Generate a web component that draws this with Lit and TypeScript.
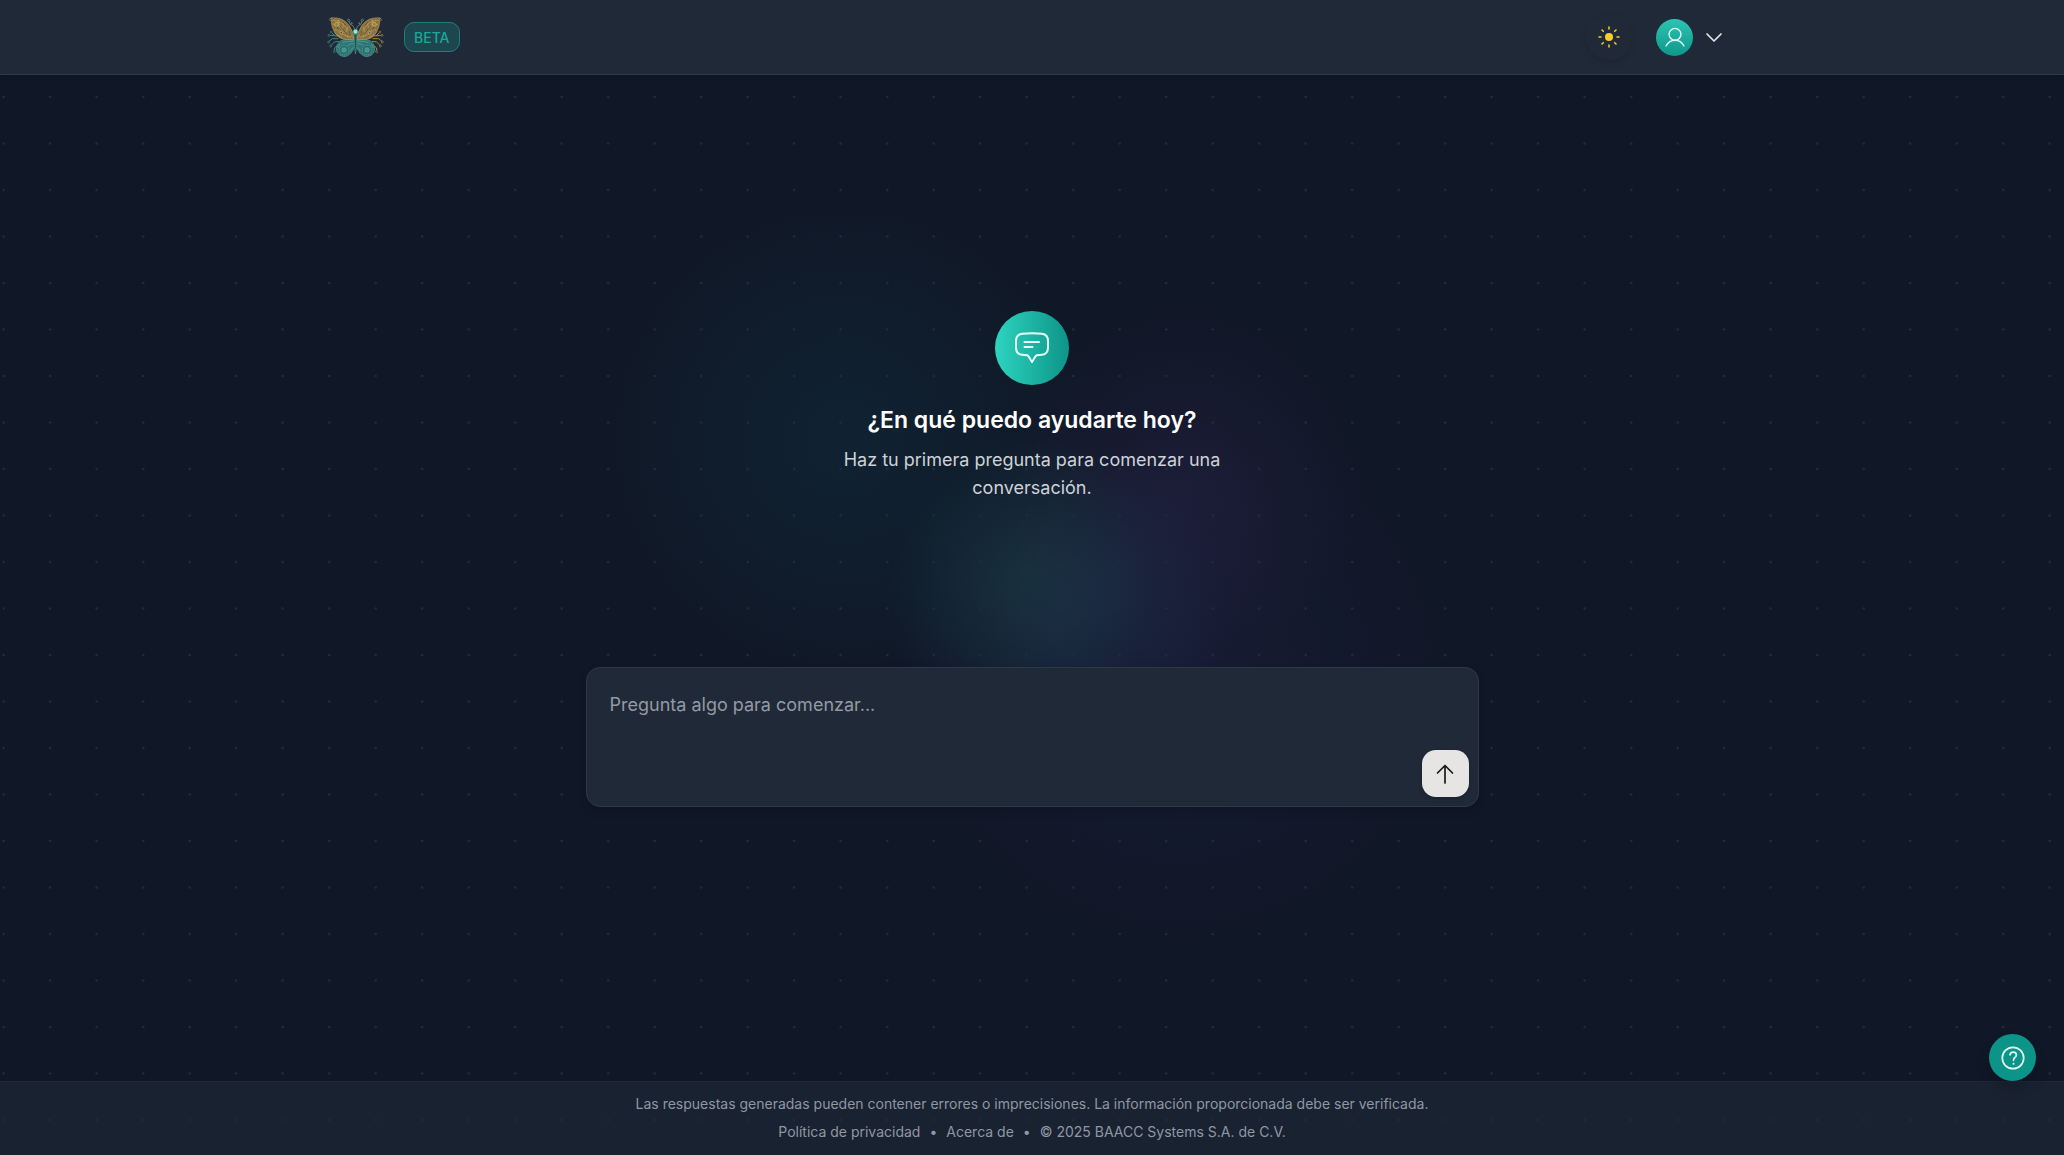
import { LitElement, html, css, svg } from "lit";
import { customElement, state } from "lit/decorators.js";

// One half of the upper wing; the logo mirrors it around the body.
const upperWing = svg`
  <path d="M12 10 Q8 4 16 6 Q48 3 66 28 Q79 46 82 72 Q66 70 50 70 Q32 66 23 50 Q13 32 12 10Z"
    fill="#8a7240" stroke="#bd9d58" stroke-width="2"/>
  <path d="M17 13 Q44 14 58 36 T78 66 M18 24 Q36 26 46 42 T72 64 M24 42 Q36 40 46 54 L66 64 M34 12 L38 26 M50 22 L46 38 M62 34 L56 50 M30 56 L44 64"
    fill="none" stroke="#d3b267" stroke-width="2.200" stroke-dasharray="4 2"/>
  <path d="M22 20 L34 40 M40 32 L60 56 M48 18 L56 28 M66 44 L70 60" fill="none" stroke="#4a4434" stroke-width="2"/>
  <circle cx="29" cy="25" r="6" fill="#9a7d3f" stroke="#e0c075" stroke-width="2"/>
  <circle cx="43" cy="50" r="4" fill="#5a5036" stroke="#e0c075" stroke-width="2"/>
  <circle cx="10" cy="11" r="3" fill="#2c3440" stroke="#8d8f84" stroke-width="1.500"/>
  <circle cx="19" cy="7" r="2.500" fill="#2c3440" stroke="#a3906a" stroke-width="1.500"/>`;

const lowerWing = svg`
  <path d="M83 72 Q60 66 42 74 Q26 84 28 104 Q34 121 54 122 Q74 118 84 90Z"
    fill="#2f7573" stroke="#4a9b94" stroke-width="2"/>
  <circle cx="51" cy="102" r="14" fill="#2b6868" stroke="#5bb0a5" stroke-width="2" stroke-dasharray="4 2"/>
  <circle cx="51" cy="102" r="7" fill="#3f938a" stroke="#64b5a8" stroke-width="1.500"/>
  <path d="M78 76 Q64 74 46 80 M80 83 Q70 82 62 88 M38 84 L32 96 M78 94 L70 106" fill="none" stroke="#58a99e" stroke-width="2"/>`;

const sideCircuits = svg`
  <path d="M30 60 L10 58 M34 68 L16 68 L6 76 M36 76 L22 78 L12 88 M34 86 L22 96 L22 104 M24 60 L14 50"
    fill="none" stroke="currentColor" stroke-width="3"/>
  <g fill="#25303d" stroke="currentColor" stroke-width="2">
    <circle cx="6" cy="58" r="3"/><circle cx="5" cy="78" r="3"/><circle cx="11" cy="90" r="3"/>
    <circle cx="22" cy="107" r="3"/><circle cx="12" cy="48" r="2.500"/>
  </g>`;

@customElement("butterfly-logo")
export class ButterflyLogo extends LitElement {
  static styles = css`
    :host { display: block; }
    .logo { display: block; width: 57px; height: 42px; }
    .teal { color: #3b8583; }
    .gold { color: #a4874a; }
  `;

  render() {
    return html`
      <svg class="logo" viewBox="0 0 171 126" role="img" aria-label="BAACC">
        <g class="teal">${sideCircuits}</g>
        <g class="gold" transform="translate(171 0) scale(-1 1)">${sideCircuits}</g>
        ${lowerWing}
        <g transform="translate(171 0) scale(-1 1)">${lowerWing}</g>
        ${upperWing}
        <g transform="translate(171 0) scale(-1 1)">${upperWing}</g>
        <g fill="none" stroke="#6f8681" stroke-width="2.500">
          <path d="M83 42 Q80 26 70 26 L66 16 M88 42 Q91 26 101 26 L105 16"/>
          <circle cx="65" cy="13" r="3.500"/><circle cx="106" cy="13" r="3.500"/>
          <circle cx="74" cy="22" r="2"/><circle cx="97" cy="22" r="2"/>
        </g>
        <path d="M81 54 L90 54 L89 92 L85.500 114 L82 92Z" fill="#245359" stroke="#56a9a0" stroke-width="1.500"/>
        <circle cx="85.500" cy="47" r="7" fill="#8ff0d6" stroke="#3f9b90" stroke-width="2"/>
      </svg>`;
  }
}

@customElement("ambient-backdrop")
export class AmbientBackdrop extends LitElement {
  static styles = css`
    :host {
      display: block;
      background:
        radial-gradient(circle 140px at calc(50% - 4px) 50%, rgb(35 160 110 / 0.1), transparent),
        radial-gradient(circle 170px at calc(50% + 28px) calc(50% + 30px), rgb(55 110 160 / 0.15), transparent),
        radial-gradient(circle 180px at calc(50% + 152px) calc(50% - 92px), rgb(85 60 140 / 0.14), transparent),
        radial-gradient(circle 280px at calc(50% + 148px) calc(50% + 96px), rgb(60 50 130 / 0.15), transparent),
        radial-gradient(circle 260px at calc(50% - 188px) calc(50% - 138px), rgb(15 110 130 / 0.13), transparent),
        #101726;
    }
    .dots { display: block; width: 100%; height: 100%; }
  `;

  render() {
    return html`
      <svg class="dots" aria-hidden="true">
        <defs>
          <pattern id="dot-grid" width="93" height="93" patternUnits="userSpaceOnUse">
            <g fill="#1b2d38">
              <circle cx="3.700" cy="4" r="1.300"/><circle cx="50.200" cy="4" r="1.300"/>
              <circle cx="3.700" cy="50.500" r="1.300"/><circle cx="50.200" cy="50.500" r="1.300"/>
            </g>
          </pattern>
        </defs>
        <rect width="100%" height="100%" fill="url(#dot-grid)"/>
      </svg>`;
  }
}

@customElement("site-header")
export class SiteHeader extends LitElement {
  static styles = css`
    :host {
      display: block;
      background: #202937;
      border-bottom: 1px solid #2e3a47;
      box-shadow: 0 1px 4px rgb(0 0 0 / 0.2);
    }
    .bar {
      box-sizing: border-box;
      max-width: 1488px;
      height: 74px;
      margin: 0 auto;
      padding: 0 37px;
      display: flex;
      align-items: center;
      justify-content: space-between;
    }
    .brand { display: flex; align-items: center; gap: 20px; }
    .home { display: block; padding-left: 2px; }
    .badge {
      box-sizing: border-box;
      height: 30px;
      padding: 0 9px;
      display: flex;
      align-items: center;
      border: 1px solid #1b7f7c;
      border-radius: 10px;
      background: #1d464f;
      color: #1ba699;
      font-size: 14px;
      font-weight: 500;
    }
    .actions { display: flex; align-items: center; gap: 12px; }
    button {
      border: 0;
      padding: 0;
      background: none;
      cursor: pointer;
      display: flex;
      align-items: center;
      justify-content: center;
    }
    .theme {
      width: 46px;
      height: 46px;
      border-radius: 50%;
      background: #202938;
      box-shadow: 0 3px 6px rgb(0 0 0 / 0.1);
    }
    .account { gap: 12px; padding: 5px 16px 5px 12px; }
    .avatar {
      width: 37px;
      height: 37px;
      border-radius: 50%;
      background: linear-gradient(#2cc4b2, #0e978b);
      display: flex;
      align-items: center;
      justify-content: center;
    }
  `;

  render() {
    return html`
      <header class="bar">
        <div class="brand">
          <a class="home" href="#inicio" aria-label="Inicio"><butterfly-logo></butterfly-logo></a>
          <span class="badge">BETA</span>
        </div>
        <div class="actions">
          <button class="theme" type="button" aria-label="Cambiar tema">
            <svg width="24" height="24" viewBox="0 0 24 24" fill="none" stroke="#f5c52c" stroke-width="1.600" stroke-linecap="round">
              <circle cx="12" cy="12" r="4" fill="#facc2b" stroke="none"/>
              <path d="M12 2v2M12 20v2M2 12h2M20 12h2M5 5l1.300 1.300M17.700 17.700L19 19M5 19l1.300-1.300M17.700 6.300L19 5"/>
            </svg>
          </button>
          <button class="account" type="button" aria-label="Menú de usuario">
            <span class="avatar">
              <svg width="22" height="22" viewBox="0 0 22 22" fill="none" stroke="#e4fbf7" stroke-width="1.400" stroke-linecap="round">
                <circle cx="11" cy="8.300" r="5.900"/>
                <path d="M2 20C4 16.200 7.300 14.200 11 14.200S18 16.200 20 20"/>
              </svg>
            </span>
            <svg width="18" height="18" viewBox="0 0 18 18" fill="none" stroke="#e2e5ea" stroke-width="1.700" stroke-linecap="round" stroke-linejoin="round">
              <path d="M2 6l7 7 7-7"/>
            </svg>
          </button>
        </div>
      </header>`;
  }
}

@customElement("chat-composer")
export class ChatComposer extends LitElement {
  @state() private draft = "";

  static styles = css`
    :host { display: block; }
    .composer {
      display: flex;
      padding: 9px;
      border: 1px solid #2d3946;
      border-radius: 14px;
      background: #202937;
      box-shadow: 0 4px 8px rgb(0 0 0 / 0.16);
    }
    .question {
      box-sizing: border-box;
      flex: 1;
      min-width: 0;
      height: 120px;
      padding: 14px;
      border: 0;
      outline: none;
      resize: none;
      background: none;
      color: #f3f4f6;
      font: 400 18px/28px Inter, "Liberation Sans", sans-serif;
    }
    .question::placeholder { color: #939aa4; opacity: 1; }
    .send {
      align-self: flex-end;
      width: 47px;
      height: 47px;
      padding: 0;
      border: 0;
      border-radius: 14px;
      background: #e7e5e4;
      display: flex;
      align-items: center;
      justify-content: center;
      cursor: pointer;
      box-shadow: 0 2px 4px rgb(0 0 0 / 0.16);
    }
  `;

  private onInput(event: Event) {
    this.draft = (event.target as HTMLTextAreaElement).value;
  }

  render() {
    return html`
      <form class="composer" @submit=${(event: Event) => event.preventDefault()}>
        <textarea class="question" aria-label="Pregunta" placeholder="Pregunta algo para comenzar..."
          .value=${this.draft} @input=${this.onInput}></textarea>
        <button class="send" type="submit" aria-label="Enviar">
          <svg width="20" height="20" viewBox="0 0 20 20" fill="none" stroke="#1c1917" stroke-width="1.700" stroke-linecap="round" stroke-linejoin="round">
            <path d="M10 19V1.500M2.500 9L10 1.500L17.500 9"/>
          </svg>
        </button>
      </form>`;
  }
}

@customElement("site-footer")
export class SiteFooter extends LitElement {
  static styles = css`
    :host {
      display: block;
      background: rgb(31 41 56 / 0.6);
      border-top: 1px solid #1e2836;
      color: #8f97a3;
      font-size: 14px;
      line-height: 20px;
      text-align: center;
    }
    .foot { padding: 12px 16px 13px; display: grid; gap: 8px; }
    .note { margin: 0; }
    .links { display: flex; justify-content: center; gap: 9px; }
    a { color: inherit; text-decoration: none; }
  `;

  render() {
    return html`
      <footer class="foot">
        <p class="note">Las respuestas generadas pueden contener errores o imprecisiones. La información proporcionada debe ser verificada.</p>
        <div class="links">
          <a href="#privacidad">Política de privacidad</a>
          <span>•</span>
          <a href="#acerca">Acerca de</a>
          <span>•</span>
          <span>© 2025 BAACC Systems S.A. de C.V.</span>
        </div>
      </footer>`;
  }
}

@customElement("app-root")
export class AppRoot extends LitElement {
  static styles = css`
    :host {
      position: relative;
      display: flex;
      flex-direction: column;
      min-height: 100vh;
      isolation: isolate;
      font-family: Inter, "Liberation Sans", sans-serif;
    }
    .backdrop { position: absolute; inset: 0; z-index: -1; }
    .main {
      flex: 1;
      display: flex;
      flex-direction: column;
      align-items: center;
      justify-content: center;
      gap: 165px;
      padding: 0 24px 38px;
    }
    .hero {
      display: flex;
      flex-direction: column;
      align-items: center;
      text-align: center;
    }
    .bubble {
      width: 74px;
      height: 74px;
      border-radius: 50%;
      background: linear-gradient(90deg, #2dd4bf, #0d9488);
      display: flex;
      align-items: center;
      justify-content: center;
    }
    .title {
      margin: 19px 0 9px;
      color: #fff;
      font-size: 23px;
      font-weight: 600;
      line-height: 33px;
    }
    .lead {
      margin: 0;
      max-width: 446px;
      color: #cdd2d8;
      font-size: 18px;
      line-height: 28px;
    }
    .composer { width: 100%; max-width: 893px; }
    .help {
      position: fixed;
      right: 28px;
      bottom: 74px;
      width: 47px;
      height: 47px;
      padding: 0;
      border: 0;
      border-radius: 50%;
      background: #0d9488;
      display: flex;
      align-items: center;
      justify-content: center;
      cursor: pointer;
      box-shadow: 0 8px 14px rgb(0 0 0 / 0.16);
    }
  `;

  render() {
    return html`
      <ambient-backdrop class="backdrop"></ambient-backdrop>
      <site-header></site-header>
      <main class="main">
        <section class="hero">
          <span class="bubble">
            <svg width="36" height="36" viewBox="0 0 36 36" fill="none" stroke="#e8fffb" stroke-width="2" stroke-linecap="round" stroke-linejoin="round">
              <path d="M8 3.800Q18 2.600 28 3.800Q34 4.600 34 11V17.500Q34 24.200 28 24.700Q25 25 23 25.200Q22 25.400 21.500 26.300L18 32L14.500 26.300Q14 25.400 13 25.200Q11 25 8 24.700Q2 24.200 2 17.500V11Q2 4.600 8 3.800Z"/>
              <path d="M10.500 12H25M10.500 17H18.500"/>
            </svg>
          </span>
          <h1 class="title">¿En qué puedo ayudarte hoy?</h1>
          <p class="lead">Haz tu primera pregunta para comenzar una conversación.</p>
        </section>
        <chat-composer class="composer"></chat-composer>
      </main>
      <site-footer></site-footer>
      <button class="help" type="button" aria-label="Ayuda">
        <svg width="24" height="24" viewBox="0 0 24 24" fill="none" stroke="#e0fbf6" stroke-width="1.700" stroke-linecap="round" stroke-linejoin="round">
          <circle cx="12" cy="12" r="10.700"/>
          <path d="M9 8.800C9.300 6.900 10.700 6.100 12.200 6.100C14 6.100 15.400 7.300 15.400 9C15.400 11.400 12.500 11.500 12.500 13.900V14.300"/>
          <path d="M12.500 17.700v.1" stroke-width="2"/>
        </svg>
      </button>`;
  }
}
